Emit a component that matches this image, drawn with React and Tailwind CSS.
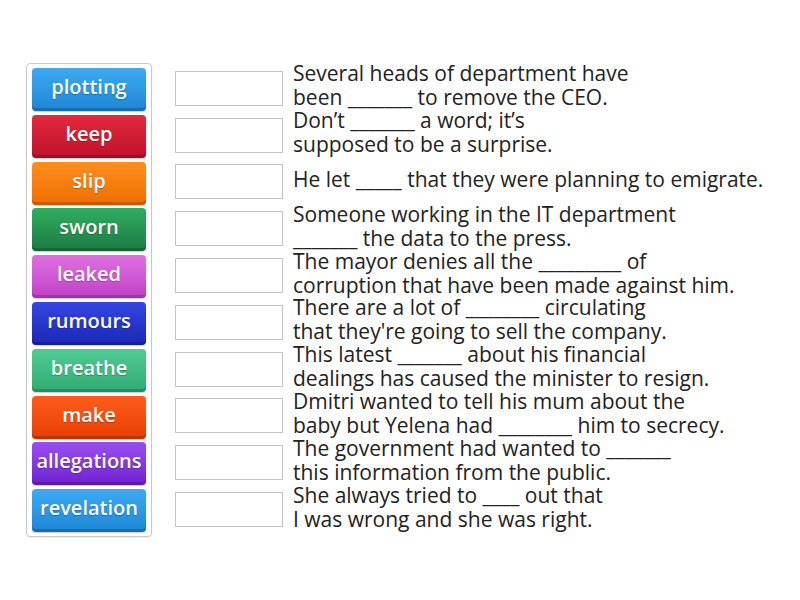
import React from "react";

const tiles = [
  { w: "plotting", c: "from-[#3eaaf2] to-[#1b86d6]" },
  { w: "keep", c: "from-[#e4283f] to-[#bd122b]" },
  { w: "slip", c: "from-[#ff8d1c] to-[#ee6e00]" },
  { w: "sworn", c: "from-[#2fae60] to-[#1d7a43]" },
  { w: "leaked", c: "from-[#e070e2] to-[#bf3fc6]" },
  { w: "rumours", c: "from-[#3546e2] to-[#1b27b5]" },
  { w: "breathe", c: "from-[#50cb93] to-[#2eab72]" },
  { w: "make", c: "from-[#ff5c1c] to-[#e53f00]" },
  { w: "allegations", c: "from-[#9b4ef1] to-[#6f1fce]" },
  { w: "revelation", c: "from-[#3eaaf2] to-[#1b86d6]" },
];

const sentences = [
  ["Several heads of department have", "been _______ to remove the CEO."],
  ["Don’t _______ a word; it’s", "supposed to be a surprise."],
  ["He let _____ that they were planning to emigrate."],
  ["Someone working in the IT department", "_______ the data to the press."],
  ["The mayor denies all the _________ of", "corruption that have been made against him."],
  ["There are a lot of ________ circulating", "that they're going to sell the company."],
  ["This latest _______ about his financial", "dealings has caused the minister to resign."],
  ["Dmitri wanted to tell his mum about the", "baby but Yelena had ________ him to secrecy."],
  ["The government had wanted to _______", "this information from the public."],
  ["She always tried to ____ out that", "I was wrong and she was right."],
];

export default function App() {
  return (
    <div
      className="w-[800px] h-[600px] bg-white flex items-start pt-[63px] pl-[26px]"
      style={{ fontFamily: '"Open Sans", "Noto Sans", sans-serif' }}
    >
      <div className="w-[126px] border border-[#c8c8c8] rounded-[4px] px-[5px] pt-[4px] pb-[4px] flex flex-col gap-[3.8px] shadow-[0_1px_2px_rgba(0,0,0,0.08)]">
        {tiles.map((t) => (
          <div
            key={t.w}
            className={`h-[43px] rounded-[4px] bg-gradient-to-b ${t.c} flex items-center justify-center text-white font-semibold text-[20px] leading-none shadow-[inset_0_-3px_0_rgba(0,0,0,0.18),0_1px_1px_rgba(0,0,0,0.2)] [text-shadow:0_1px_1px_rgba(0,0,0,0.25)]`}
          >
            <span className="-mt-[5px]">{t.w}</span>
          </div>
        ))}
      </div>
      <div className="ml-[23px] pt-[2px] flex flex-col">
        {sentences.map((s, i) => (
          <div key={i} className="h-[46.8px] flex items-center">
            <div className="w-[108px] h-[35px] border border-[#c4c4c4] bg-white shrink-0" />
            <div className="ml-[10px] mb-[6px] text-[21px] leading-[24px] text-[#222] whitespace-nowrap">
              {s.map((l, j) => (
                <div key={j}>{l}</div>
              ))}
            </div>
          </div>
        ))}
      </div>
    </div>
  );
}
